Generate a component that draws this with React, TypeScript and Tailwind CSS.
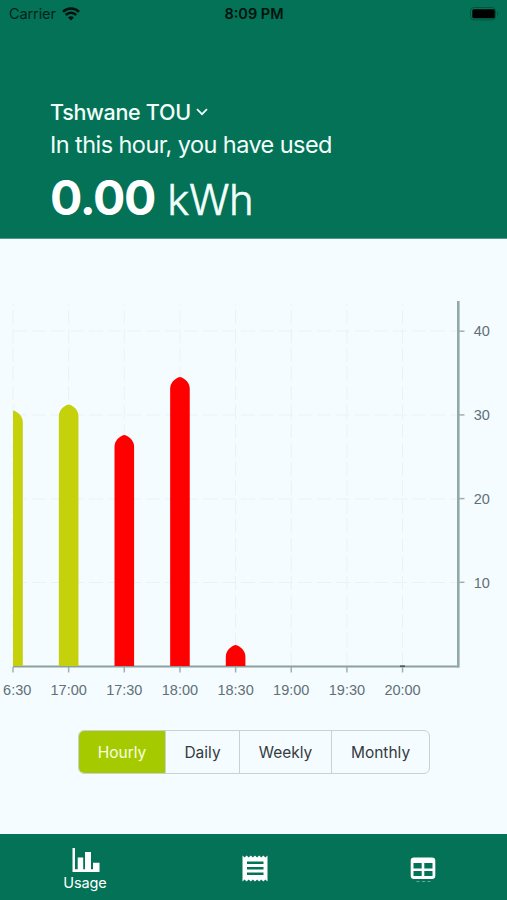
import { useState } from "react";

const READINGS = [
  { time: "16:30", top: 171.5, color: "#c5d10a" },
  { time: "17:00", top: 165.5, color: "#c5d10a" },
  { time: "17:30", top: 196, color: "#ff0000" },
  { time: "18:00", top: 138, color: "#ff0000" },
  { time: "18:30", top: 406, color: "#ff0000" },
  { time: "19:00", top: null, color: "" },
  { time: "19:30", top: null, color: "" },
  { time: "20:00", top: null, color: "" },
];

const PERIODS = [
  { label: "Hourly", width: "w-[87px]" },
  { label: "Daily", width: "w-[74px]" },
  { label: "Weekly", width: "w-[92px]" },
  { label: "Monthly", width: "w-[97px]" },
];

const BASE = 427;
const STEP = 55.65;

function barPath(x: number, top: number) {
  const l = x - 9.8;
  const r = x + 9.8;
  return `M${l} ${BASE}V${top + 11.5}C${l} ${top + 6} ${x - 5} ${top + 1} ${x} ${top}C${x + 5} ${top + 1} ${r} ${top + 6} ${r} ${top + 11.5}V${BASE}Z`;
}

function StatusBar() {
  return (
    <div className="flex h-7 items-center text-[14.5px] leading-7 text-[#00231b]">
      <div className="flex flex-1 items-center gap-[6px] pl-[9px]">
        <span className="tracking-[-0.1px]">Carrier</span>
        <svg width="18" height="14" viewBox="0 0 18 14" fill="none" stroke="#00120e" strokeWidth="2.5">
          <path d="M1 4.8A11.3 11.3 0 0 1 17 4.8" />
          <path d="M3.8 8a7.3 7.3 0 0 1 10.4 0" />
          <path d="M9 13.4 6.1 10.5a4 4 0 0 1 5.8 0Z" fill="#00120e" stroke="none" />
        </svg>
      </div>
      <span className="font-semibold text-[#00120e]">8:09 PM</span>
      <div className="flex flex-1 justify-end pr-[8px]">
        <svg width="29" height="14" viewBox="0 0 29 14">
          <rect x="0.5" y="0.5" width="25" height="12.5" rx="3.5" fill="none" stroke="#005440" />
          <rect x="2.3" y="2.3" width="22.5" height="9" rx="1.5" fill="#000" />
          <path d="M27 4.5v4.5c1.5-.6 1.5-3.9 0-4.5Z" fill="#005440" />
        </svg>
      </div>
    </div>
  );
}

function UsageChart() {
  return (
    <svg
      width="507"
      height="480"
      viewBox="0 0 507 480"
      className="block shrink-0 font-['Liberation_Sans',Arial,sans-serif] text-[14.5px]"
    >
      <defs>
        <clipPath id="plot">
          <rect x="13" y="60" width="446" height="370" />
        </clipPath>
      </defs>

      {/* Grid */}
      <g stroke="#ebf1f4" strokeDasharray="14 5" fill="none">
        {READINGS.map((r, i) => (
          <path key={r.time} d={`M${13 + i * STEP} ${BASE}V65`} />
        ))}
        {[92, 176, 260, 343.5].map((y) => (
          <path key={y} d={`M13 ${y}H457`} />
        ))}
      </g>

      {/* Axes */}
      <path d="M13 427.5H459" stroke="#8d9f9f" strokeWidth="2" />
      <path d="M458.3 62V428.5" stroke="#93a8a7" strokeWidth="2.6" />
      {READINGS.map((r, i) => (
        <g key={r.time}>
          <path d={`M${13 + i * STEP} 428V433.5`} stroke="#9fb0b4" strokeWidth="1.5" />
          <text x={i === 0 ? 17.2 : 13 + i * STEP} y="456" textAnchor="middle" fill="#607078">
            {i === 0 ? "6:30" : r.time}
          </text>
        </g>
      ))}
      {[10, 20, 30, 40].map((v) => (
        <g key={v}>
          <path d={`M459 ${BASE - v * 8.37}H464.5`} stroke="#9fb0b4" strokeWidth="1.5" />
          <text x="473.8" y={BASE - v * 8.37 + 5.2} fill="#607078">
            {v}
          </text>
        </g>
      ))}

      {/* Bars */}
      <g clipPath="url(#plot)">
        {READINGS.map((r, i) =>
          r.top === null ? null : <path key={r.time} d={barPath(13 + i * STEP, r.top)} fill={r.color} />
        )}
      </g>
      <path d="M400 427.2h5" stroke="#4a5758" strokeWidth="1.5" />
    </svg>
  );
}

function TabBar() {
  return (
    <nav className="grid h-[66px] shrink-0 grid-cols-3 bg-[#037256] text-white">
      <div className="flex flex-col items-center pt-[14px]">
        <svg width="28" height="24" viewBox="0 0 28 24" fill="currentColor" className="ml-[2px]">
          <path d="M.5 0h2.5v21.2h2.7V9.5h5.5v11.7h1.8V4h6v17.2h2V14.8h6.5V24H.5Z" />
        </svg>
        <span className="mt-[1px] ml-px text-[14.5px] leading-5 tracking-[-0.1px]">Usage</span>
      </div>
      <div className="flex justify-center pt-[21px] pl-[2px]">
        <svg width="26" height="27" viewBox="0 0 26 27" fill="currentColor">
          <path
            fillRule="evenodd"
            d="M.5.5l2.08 2 2.08-2 2.08 2 2.08-2 2.08 2 2.08-2 2.08 2 2.08-2 2.08 2 2.08-2 2.08 2 2.12-2v26l-2.12-2-2.08 2-2.08-2-2.08 2-2.08-2-2.08 2-2.08-2-2.08 2-2.08-2-2.08 2-2.08-2-2.08 2ZM5 6.5V9h16.5V6.5Zm0 5.5v2.6h16.5V12Zm0 5.5V20h16.5v-2.5Z"
          />
        </svg>
      </div>
      <div className="flex flex-col items-center pt-[23px] pl-px">
        <svg width="26" height="26" viewBox="0 0 26 26" fill="currentColor">
          <path
            fillRule="evenodd"
            d="M4 .5h18a3.3 3.3 0 0 1 3.3 3.3v15A3.3 3.3 0 0 1 22 22H4a3.3 3.3 0 0 1-3.3-3.2v-15A3.3 3.3 0 0 1 4 .5ZM3.5 6v5.5h8.2V6Zm10.8 0v5.5h8.2V6ZM3.5 14v5h8.2v-5Zm10.8 0v5h8.2v-5Z"
          />
          <path d="M6.5 24.5h3M12 24.5h3M17.5 24.5h3" stroke="#65a996" />
        </svg>
      </div>
    </nav>
  );
}

export default function App() {
  const [period, setPeriod] = useState("Hourly");

  return (
    <div className="flex h-[900px] w-[507px] flex-col overflow-hidden bg-[#f5fcff] font-['Inter',sans-serif]">
      <header className="h-[239px] shrink-0 border-b border-[#4e9c88] bg-[#037256] text-[#f2fffb]">
        <StatusBar />
        <div className="pt-[70px] pl-[50px]">
          <div className="flex h-7 items-center gap-[5px]">
            <span className="text-[21.5px] leading-7 font-medium tracking-[-0.3px]">Tshwane TOU</span>
            <svg width="12" height="8" viewBox="0 0 12 8" fill="none" stroke="currentColor" strokeWidth="1.7">
              <path d="m1 1.2 5 5 5-5" />
            </svg>
          </div>
          <p className="h-8 text-[23.5px] leading-[37px] tracking-[-0.57px] whitespace-nowrap">
            In this hour, you have used
          </p>
          <div className="mt-[10px] flex items-baseline leading-[60px] whitespace-nowrap">
            <span className="text-[48px] font-bold tracking-[-1.3px] text-white">0.00</span>
            <span className="ml-3 text-[42px] font-light tracking-[-0.4px] [-webkit-text-stroke:0.5px]">kWh</span>
          </div>
        </div>
      </header>

      <main className="flex flex-1 flex-col">
        <UsageChart />
        <div className="mt-[11px] ml-[78px] flex h-[44px] w-[352px] overflow-hidden rounded-[6px] border border-[#cbd0d3]">
          {PERIODS.map((p) => (
            <button
              key={p.label}
              onClick={() => setPeriod(p.label)}
              className={`${p.width} shrink-0 border-r border-[#cbd0d3] pt-px text-[15.5px] last:border-r-0 ${
                period === p.label ? "bg-[#a5cb00] text-[#f8ffe0]" : "text-[#343b3e]"
              }`}
            >
              {p.label}
            </button>
          ))}
        </div>
      </main>

      <TabBar />
    </div>
  );
}
